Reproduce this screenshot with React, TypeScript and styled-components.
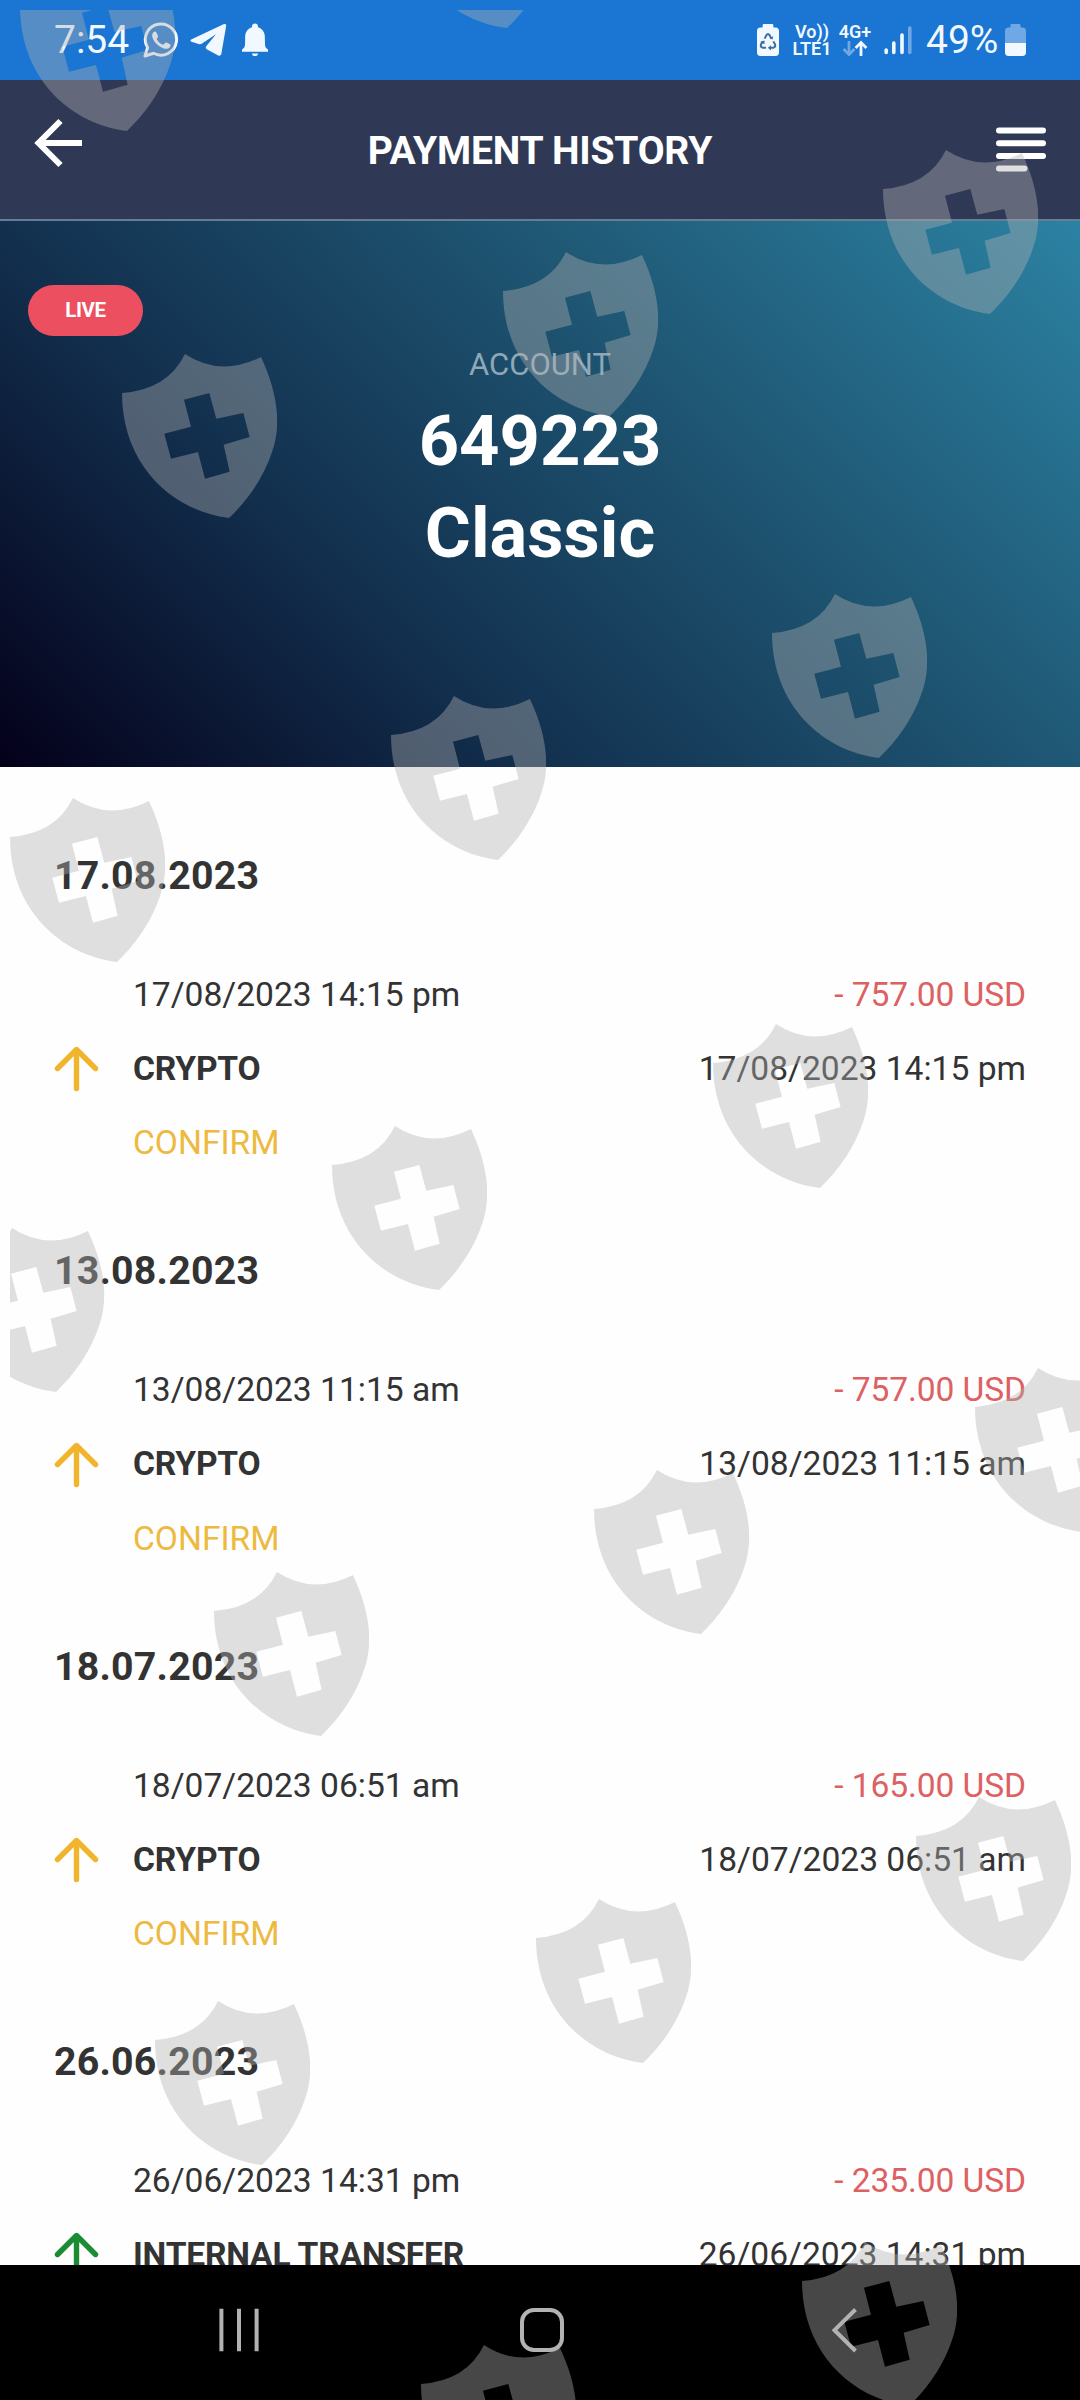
import * as React from "react";
import styled, {createGlobalStyle} from "styled-components";

const GlobalStyle = createGlobalStyle`
  * {
    box-sizing: border-box;
  }

  body {
    margin: 0;
    background: #fefefe;
    font-family: Roboto, "Liberation Sans", sans-serif;
  }
`;

const Screen = styled.div`
  position: relative;
  display: flex;
  flex-direction: column;
  width: 1080px;
  height: 2400px;
  overflow: hidden;
  background: #fefefe;
`;

const StatusBar = styled.div`
  display: flex;
  align-items: center;
  justify-content: space-between;
  flex: none;
  height: 80px;
  padding: 0 54px 0 54px;
  background: #1a75d3;
  color: #f1f8ff;
`;

const StatusGroup = styled.div`
  display: flex;
  align-items: center;
`;

const StatusText = styled.span<{ $width: number; $gap?: number }>`
  width: ${p => p.$width}px;
  margin-left: ${p => p.$gap ?? 0}px;
  font-size: 39px;
  line-height: 46px;
  white-space: nowrap;
`;

const StatusIcon = styled.svg<{ $gap: number }>`
  display: block;
  flex: none;
  margin-left: ${p => p.$gap}px;
`;

const Network = styled.div<{ $gap: number; $width: number }>`
  display: flex;
  flex-direction: column;
  align-items: center;
  width: ${p => p.$width}px;
  margin-left: ${p => p.$gap}px;
  font-size: 18px;
  font-weight: 600;
  line-height: 17.5px;
  white-space: nowrap;
`;

const Header = styled.header`
  display: flex;
  align-items: center;
  justify-content: space-between;
  flex: none;
  height: 141px;
  padding: 0 33px;
  background: #2f3955;
  border-bottom: 2px solid #667d92;
`;

const BackIcon = styled.svg`
  margin-bottom: 13px;
`;

const Title = styled.h1`
  margin: 0;
  padding-top: 2px;
  color: #fff;
  font-size: 39px;
  font-weight: 700;
  line-height: 46px;
  letter-spacing: -0.2px;
`;

const Hero = styled.section`
  display: flex;
  flex-direction: column;
  flex: none;
  height: 546px;
  padding: 64px 28px 0;
  background: linear-gradient(45deg, #04001a 0%, #12304e 33%, #1f5875 66%, #2c82a3 100%);
`;

const Badge = styled.span`
  width: 115px;
  height: 51px;
  border-radius: 26px;
  background: #eb4f60;
  color: #fff;
  font-size: 20.5px;
  font-weight: 700;
  line-height: 51px;
  letter-spacing: -0.4px;
  text-align: center;
`;

const AccountLabel = styled.span`
  margin: 9px 0 10px;
  color: #8fa7b7;
  font-size: 31px;
  font-weight: 400;
  line-height: 40px;
  text-align: center;
`;

const AccountName = styled.strong`
  color: #fff;
  font-size: 70.5px;
  font-weight: 700;
  line-height: 92px;
  text-align: center;
`;

const List = styled.main`
  flex: 1;
  min-height: 0;
  padding: 79px 54px 0;
  overflow: hidden;
`;

const Group = styled.section`
  height: 395.4px;
`;

const GroupDate = styled.h2`
  margin: 0 0 52px;
  color: #333;
  font-size: 39.3px;
  font-weight: 700;
  line-height: 60px;
  letter-spacing: 0.2px;
`;

const Payment = styled.div`
  display: grid;
  grid-template-columns: 79px 1fr auto;
  align-items: center;
  color: #333;
  font-size: 33.6px;
  line-height: 74.1px;
`;

const Details = styled.div`
  display: flex;
  flex-direction: column;
  min-height: 222.3px;
`;

const Totals = styled(Details)`
  align-items: flex-end;
`;

const Method = styled.span`
  font-weight: 700;
  letter-spacing: -0.2px;
`;

const Status = styled.span`
  color: #edb93f;
`;

const Amount = styled.span`
  color: #dd6062;
  letter-spacing: -0.1px;
`;

const NavBar = styled.nav`
  display: flex;
  align-items: center;
  justify-content: space-between;
  flex: none;
  height: 135px;
  padding: 0 212px 5px 215px;
  background: #000;
`;

const Overlay = styled.div`
  position: absolute;
  inset: 10px 0 0 10px;
  overflow: hidden;
  pointer-events: none;
`;

const Shield = styled.svg<{ $x: number; $y: number }>`
  position: absolute;
  left: ${p => p.$x - 10}px;
  top: ${p => p.$y - 10}px;
  fill: rgba(178, 178, 178, 0.4);
`;

const shields = [
  [19.5, -32.6], [400, -135.8], [883, 150], [502.8, 252.4], [121.7, 354.3],
  [771.8, 593.7], [391.2, 695.5], [9.8, 797.7], [713, 1023.8], [331.6, 1125.6],
  [-50.6, 1227.8], [975, 1367.5], [594.4, 1469.6], [213.8, 1571.6],
  [916.2, 1797.3], [535.6, 1899.4], [155, 2001.4], [801.8, 2242], [421, 2345],
];

const payments = [
  {
    day: "17.08.2023",
    time: "17/08/2023 14:15 pm",
    method: "CRYPTO",
    amount: "- 757.00 USD",
    status: "CONFIRM",
    color: "#f0b42d",
  },
  {
    day: "13.08.2023",
    time: "13/08/2023 11:15 am",
    method: "CRYPTO",
    amount: "- 757.00 USD",
    status: "CONFIRM",
    color: "#f0b42d",
  },
  {
    day: "18.07.2023",
    time: "18/07/2023 06:51 am",
    method: "CRYPTO",
    amount: "- 165.00 USD",
    status: "CONFIRM",
    color: "#f0b42d",
  },
  {
    day: "26.06.2023",
    time: "26/06/2023 14:31 pm",
    method: "INTERNAL TRANSFER",
    amount: "- 235.00 USD",
    status: "",
    color: "#1c8c34",
  },
];

function ArrowUp({color}: { color: string }) {
  return (
    <svg width="46" height="46" viewBox="0 0 46 46" fill="none" stroke={color} strokeWidth="5.4"
         strokeLinecap="round" strokeLinejoin="round">
      <path d="M22.5 42.5V4M3.5 22.5L22.5 3.5L41.5 22.5"/>
    </svg>
  );
}

function PhoneStatus() {
  return (
    <StatusBar>
      <StatusGroup>
        <StatusText $width={75}>7:54</StatusText>
        <StatusIcon $gap={14} width="36" height="36" viewBox="0 0 36 36" fill="none">
          <path d="M2 34L4.6 25.6A15.6 15.6 0 1 1 10.6 31.3Z" stroke="#f1f8ff" strokeWidth="3" strokeLinejoin="round"/>
          <path
            d="M10.2 10.4C11.3 9.2 12.8 9.3 13.4 10.5L15 14C15.4 15 14.2 16 13.6 17C15.2 20 17.4 21.8 20.2 22.8L22.2 20.9C22.8 20.3 23.4 20.4 24 20.7L27 22.2C28.2 22.9 27.4 25.2 25.8 26.2C23.6 27.4 20 26.6 16.4 24.2C12.4 21.4 9.6 17.4 9.2 14.2C9 12.8 9.4 11.3 10.2 10.4Z"
            fill="#f1f8ff"/>
        </StatusIcon>
        <StatusIcon $gap={11} width="37" height="34" viewBox="0 0 37 34" fill="#f1f8ff">
          <path
            d="M1.2 16.6L34 1.1C35.6 .6 36.4 1.4 36.2 2.8L31.4 30.6C31 32.6 29.6 33.4 27.8 32.3L17.2 26.6C15.4 25.4 15.4 24.2 16.6 22.7L26 11.2L12 20.4C10.8 21.2 9.8 21.3 8.6 20.9L1.4 18.7C.2 18.2 .2 17.1 1.2 16.6Z"/>
        </StatusIcon>
        <StatusIcon $gap={14} width="28" height="34" viewBox="0 0 28 34" fill="#f1f8ff">
          <path
            d="M14 .6C15.8 .6 17 1.8 17 3.5V4.2C21 5.4 23.6 8.8 23.8 13L24 21.6C24.1 24 25 25.2 27 26.6V28.8H1V26.6C3 25.2 3.9 24 4 21.6L4.2 13C4.4 8.8 7 5.4 11 4.2V3.5C11 1.8 12.2 .6 14 .6Z"/>
          <path d="M11 30.4H17C17 32.2 15.6 33 14 33S11 32.2 11 30.4Z"/>
        </StatusIcon>
      </StatusGroup>
      <StatusGroup>
        <StatusIcon $gap={0} width="22" height="32" viewBox="0 0 22 32">
          <path
            d="M7 0H15C16 0 16.4 .6 16.4 1.4V3.6H18.6C20.8 3.6 22 4.8 22 7V28.6C22 30.8 20.8 32 18.6 32H3.4C1.2 32 0 30.8 0 28.6V7C0 4.8 1.2 3.6 3.4 3.6H5.6V1.4C5.6 .6 6 0 7 0Z"
            fill="#f1f8ff"/>
          <path
            d="M7.6 14.6L9.4 11.2Q11 9 12.6 11.2L14.4 14.6M16.4 17.4L18 20.4Q18.8 23.6 16 23.8H13.2M9 23.8H6Q3.2 23.6 4 20.4L5.6 17.6"
            fill="none" stroke="#3d6f9e" strokeWidth="2"/>
          <path d="M12.6 14.2L15.6 15.6L16.2 12.2ZM14 21.2V26.4L10.8 23.8ZM3.2 18L7.4 16.4L7.6 20.2Z" fill="#3d6f9e"/>
        </StatusIcon>
        <Network $gap={13} $width={40}>
          <span>Vo))</span>
          <span>LTE1</span>
        </Network>
        <Network $gap={5} $width={36}>
          <span>4G+</span>
          <svg width="26" height="17" viewBox="0 0 26 17" fill="none" strokeWidth="2.8">
            <path d="M7 1V14M1.6 9L7 14.6L12.4 9" stroke="#6fa8e4"/>
            <path d="M19 16V3M13.6 8L19 2.4L24.4 8" stroke="#f1f8ff"/>
          </svg>
        </Network>
        <StatusIcon $gap={11} width="28" height="30" viewBox="0 0 28 30" strokeWidth="3.6" strokeLinecap="round">
          <path d="M2.2 25V27.5M9.8 18V27.5M18 10V27.5" stroke="#f1f8ff"/>
          <path d="M25.8 3V27.5" stroke="#6fa8e4"/>
        </StatusIcon>
        <StatusText $gap={14} $width={73}>49%</StatusText>
        <StatusIcon $gap={6} width="21" height="32" viewBox="0 0 21 32">
          <path
            d="M7 0H14C15 0 15.6 .6 15.6 1.4V3.6H17.6C19.8 3.6 21 4.8 21 7V19H0V7C0 4.8 1.2 3.6 3.4 3.6H5.4V1.4C5.4 .6 6 0 7 0Z"
            fill="#6fa8e4"/>
          <path d="M0 19H21V28.6C21 30.8 19.8 32 17.6 32H3.4C1.2 32 0 30.8 0 28.6Z" fill="#f1f8ff"/>
        </StatusIcon>
      </StatusGroup>
    </StatusBar>
  );
}

export default function App() {
  return (
    <Screen>
      <GlobalStyle/>
      <PhoneStatus/>
      <Header>
        <BackIcon width="52" height="50" viewBox="0 0 52 50" fill="none" stroke="#fff" strokeWidth="6">
          <path d="M27.5 3L5.5 25L27.5 47M5.5 25H49"/>
        </BackIcon>
        <Title>PAYMENT HISTORY</Title>
        <svg width="52" height="46" viewBox="0 0 52 46" fill="none" stroke="#fff" strokeWidth="6" strokeLinecap="round">
          <path d="M4 3.5H48M4 16.2H48M4 29H48M4 41.5H29.5"/>
        </svg>
      </Header>
      <Hero>
        <Badge>LIVE</Badge>
        <AccountLabel>ACCOUNT</AccountLabel>
        <AccountName>649223</AccountName>
        <AccountName>Classic</AccountName>
      </Hero>
      <List>
        {payments.map(row => (
          <Group key={row.day}>
            <GroupDate>{row.day}</GroupDate>
            <Payment>
              <ArrowUp color={row.color}/>
              <Details>
                <span>{row.time}</span>
                <Method>{row.method}</Method>
                {row.status && <Status>{row.status}</Status>}
              </Details>
              <Totals>
                <Amount>{row.amount}</Amount>
                <span>{row.time}</span>
              </Totals>
            </Payment>
          </Group>
        ))}
      </List>
      <NavBar>
        <svg width="48" height="48" viewBox="0 0 48 48" fill="none" stroke="#b2b2b2" strokeWidth="4">
          <path d="M6.4 2.7V45.3M24 2.7V45.3M41.6 2.7V45.3"/>
        </svg>
        <svg width="48" height="48" viewBox="0 0 48 48" fill="none" stroke="#b2b2b2" strokeWidth="4">
          <rect x="4" y="4" width="40" height="40" rx="12"/>
        </svg>
        <svg width="48" height="48" viewBox="0 0 48 48" fill="none" stroke="#b2b2b2" strokeWidth="4">
          <path d="M35.5 3.5L14.5 24.2L35.5 45"/>
        </svg>
      </NavBar>
      <Overlay>
        {shields.map(([x, y]) => (
          <Shield key={`${x}-${y}`} $x={x} $y={y} width="155.3" height="164" viewBox="35 28 466 492">
            <path
              fillRule="evenodd"
              d="M35 145Q172 135 224 28Q330 98 452 37C500 140 515 235 486 320C462 395 412 468 356 520C190 500 35 365 35 145ZM221 165L242 246L162 267L182 342L263 322L284 402L358 381L340 300L418 277L399 205L318 222L297 145Z"/>
          </Shield>
        ))}
      </Overlay>
    </Screen>
  );
}
